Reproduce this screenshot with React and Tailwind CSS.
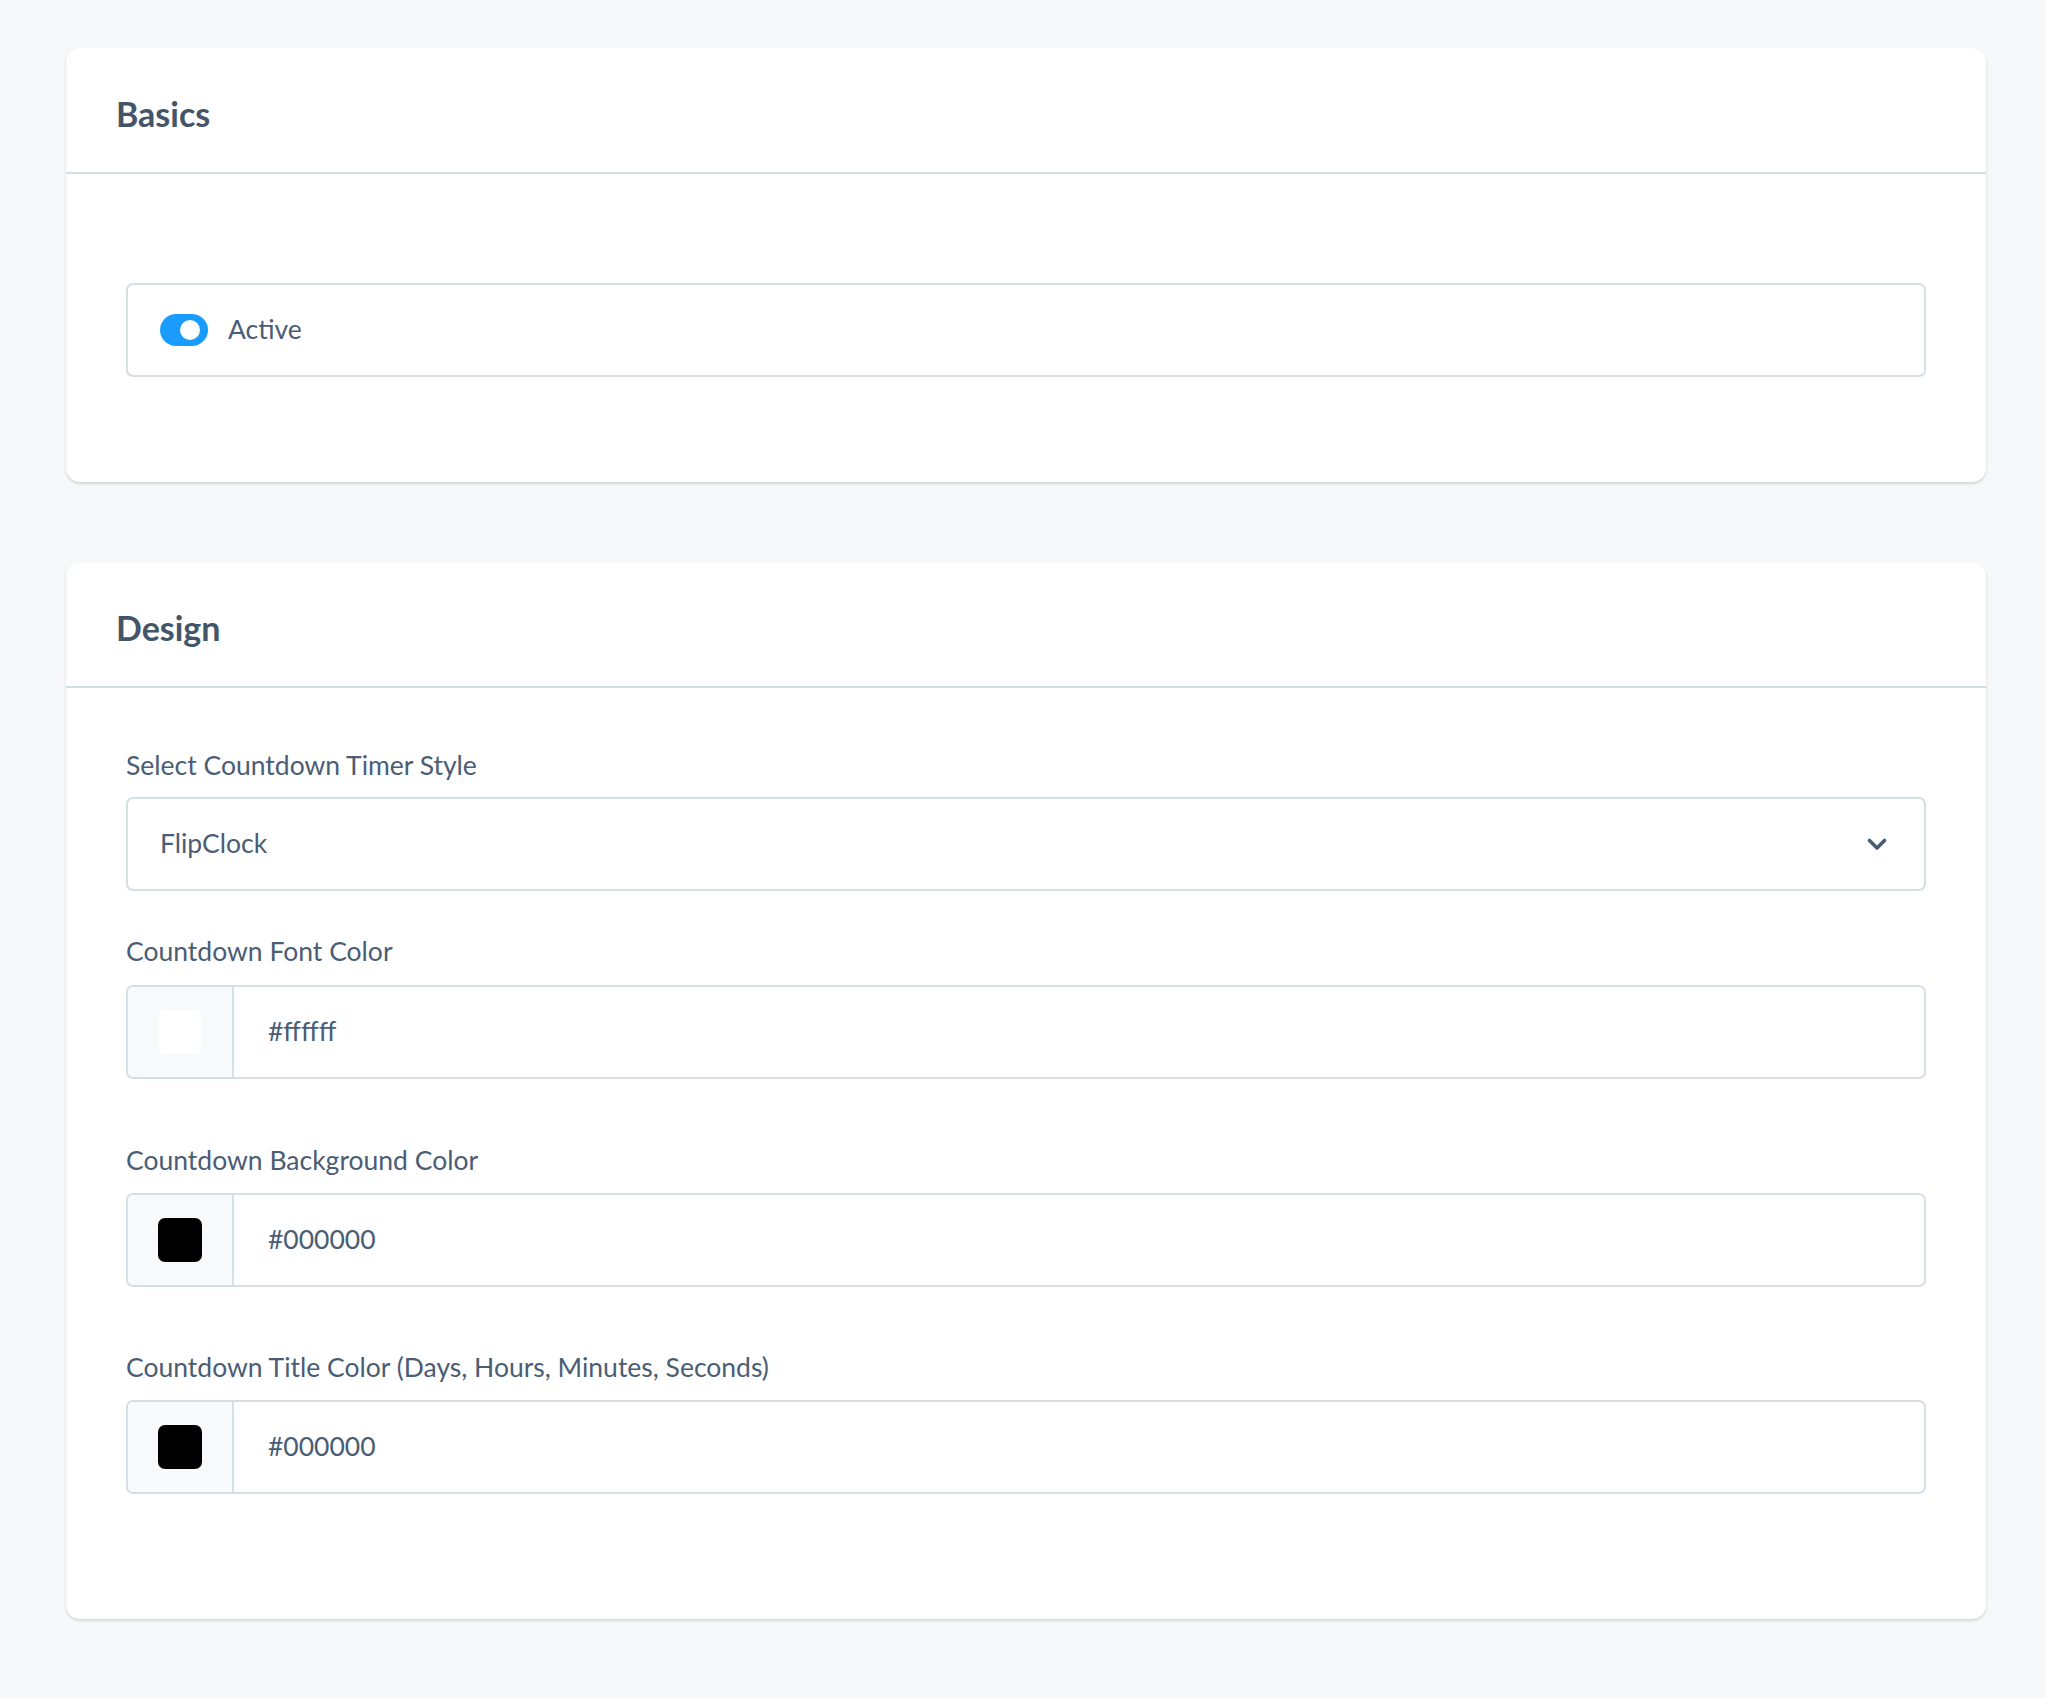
import React, { useState } from 'react';

const font = { fontFamily: 'Lato, "Open Sans", sans-serif' };

const Card = ({ title, bodyClass, children }) => (
  <div className="bg-white rounded-[14px] shadow-[0_2px_3px_rgba(0,0,0,0.13),0_0_2px_rgba(0,0,0,0.05)]">
    <div className="h-[126px] px-[50px] pt-[8px] flex items-center border-b-2 border-[#d3dde5]">
      <h2 className="text-[34px] font-bold text-[#435569] leading-none">{title}</h2>
    </div>
    <div className={bodyClass}>{children}</div>
  </div>
);

const Label = ({ children }) => (
  <label className="block text-[26.5px] leading-[36px] text-[#4a5d74]">{children}</label>
);

const ColorInput = ({ value }) => (
  <div className="flex h-[94px] border-2 border-[#d5dde5] rounded-[7px] overflow-hidden">
    <div className="w-[106px] bg-[#f7f9fb] border-r-2 border-[#d5dde5] flex items-center justify-center">
      <div className="w-[44px] h-[44px] rounded-[7px]" style={{ background: value }} />
    </div>
    <div className="flex-1 flex items-center pl-[34px] text-[26.5px] text-[#4a5d74]">{value}</div>
  </div>
);

const App = () => {
  const [active, setActive] = useState(true);

  return (
    <div className="min-h-screen bg-[#f7f8fa] pl-[66px] pr-[60px] pt-[48px] pb-[79px]" style={font}>
      <Card title="Basics" bodyClass="px-[60px] pt-[109px] pb-[105px]">
        <div className="h-[94px] border-2 border-[#d5dde5] rounded-[7px] flex items-center pl-[32px]">
          <button
            type="button"
            onClick={() => setActive(!active)}
            className={`w-[48px] h-[32px] rounded-full flex items-center px-[8px] ${active ? 'bg-[#1a9cff] justify-end' : 'bg-[#cbd5e1] justify-start'}`}
          >
            <span className="w-[20px] h-[20px] rounded-full bg-white block" />
          </button>
          <span className="ml-[20px] text-[26.5px] text-[#4a5d74]">Active</span>
        </div>
      </Card>

      <div className="h-[80px]" />

      <Card title="Design" bodyClass="px-[60px] pt-[59px] pb-[125px]">
        <Label>Select Countdown Timer Style</Label>
        <div className="mt-[14px] h-[94px] border-2 border-[#d5dde5] rounded-[7px] flex items-center justify-between pl-[32px] pr-[37px]">
          <span className="text-[26.5px] text-[#4a5d74]">FlipClock</span>
          <svg width="20" height="13" viewBox="0 0 20 13" fill="none">
            <path d="M2.5 2.5 L10 10 L17.5 2.5" stroke="#4a5d74" strokeWidth="3.6" strokeLinecap="round" strokeLinejoin="round" />
          </svg>
        </div>

        <div className="mt-[42px]">
          <Label>Countdown Font Color</Label>
          <div className="mt-[16px]">
            <ColorInput value="#ffffff" />
          </div>
        </div>

        <div className="mt-[63px]">
          <Label>Countdown Background Color</Label>
          <div className="mt-[15px]">
            <ColorInput value="#000000" />
          </div>
        </div>

        <div className="mt-[62px]">
          <Label>Countdown Title Color (Days, Hours, Minutes, Seconds)</Label>
          <div className="mt-[15px]">
            <ColorInput value="#000000" />
          </div>
        </div>
      </Card>
    </div>
  );
};

export default App;
